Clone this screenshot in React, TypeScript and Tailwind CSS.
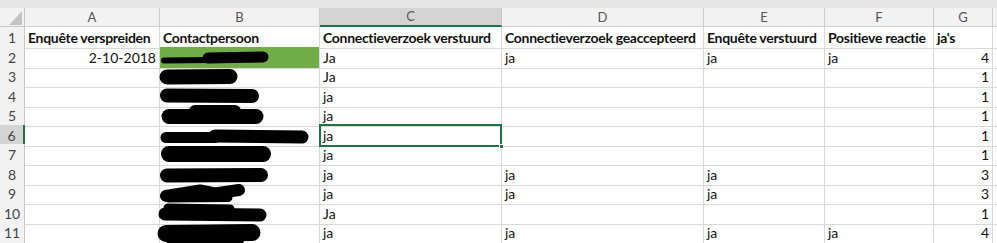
import React from "react";

const cols = ["A", "B", "C", "D", "E", "F", "G"];
const heights = ["h-[20px]", "h-[19px]", "h-[20px]", "h-[19px]", "h-[20px]", "h-[19px]", "h-[20px]", "h-[19px]", "h-[20px]", "h-[19px]", "h-[20px]"];

type Row = { a?: string; c?: string; d?: string; e?: string; f?: string; g?: string };
const data: Row[] = [
  { a: "2-10-2018", c: "Ja", d: "ja", e: "ja", f: "ja", g: "4" },
  { c: "Ja", g: "1" },
  { c: "ja", g: "1" },
  { c: "ja", g: "1" },
  { c: "ja", g: "1" },
  { c: "ja", g: "1" },
  { c: "ja", d: "ja", e: "ja", g: "3" },
  { c: "ja", d: "ja", e: "ja", g: "3" },
  { c: "Ja", g: "1" },
  { c: "ja", d: "ja", e: "ja", f: "ja", g: "4" },
];

const grid = "grid grid-cols-[25px_135px_160px_182px_202px_121px_109px_59px_1fr]";
const cell = "border-r border-b border-[#d9d9d9] flex items-end pb-[2px] px-[3px] whitespace-nowrap overflow-visible leading-[16px]";

export default function App() {
  const headers = ["Enquête verspreiden", "Contactpersoon", "Connectieverzoek verstuurd", "Connectieverzoek geaccepteerd", "Enquête verstuurd", "Positieve reactie", "ja's"];
  return (
    <div className="relative w-[997px] h-[243px] overflow-hidden bg-white text-[14px] text-[#111]" style={{ fontFamily: "Lato, 'Open Sans', sans-serif" }}>
      <div className="h-[8px] bg-[#e6e6e6]" />
      <div className={`${grid} h-[19px] bg-[#f2f2f2] text-[#555] text-[13px]`}>
        <div className="border-r border-b border-[#c8c8c8] relative">
          <svg width="25" height="19" className="absolute inset-0">
            <polygon points="22,3 22,17 9,17" fill="#c4c4c4" />
          </svg>
        </div>
        {cols.map((c) => (
          <div
            key={c}
            className={
              c === "C"
                ? "bg-[#d4d4d4] border-r border-[#c8c8c8] border-b-2 border-b-[#217346] flex items-center justify-center leading-none"
                : "border-r border-b border-[#cfcfcf] flex items-center justify-center leading-none"
            }
          >
            {c}
          </div>
        ))}
        <div className="border-b border-[#cfcfcf]" />
      </div>
      {/* row 1 */}
      <div className={`${grid} ${heights[0]} font-bold tracking-[-0.3px]`}>
        <div className="bg-[#f2f2f2] border-r border-b border-[#c8c8c8] flex items-center justify-center text-[#444] font-normal tracking-normal">1</div>
        {headers.map((h, i) => (
          <div key={i} className={cell}>{h}</div>
        ))}
        <div className="border-b border-[#d9d9d9]" />
      </div>
      {data.map((r, i) => {
        const n = i + 2;
        const sel = n === 6;
        return (
          <div key={n} className={`${grid} ${heights[i + 1]}`}>
            <div
              className={
                sel
                  ? "bg-[#d4d4d4] border-r-2 border-r-[#217346] border-b border-[#c8c8c8] flex items-center justify-center text-[#444]"
                  : "bg-[#f2f2f2] border-r border-b border-[#c8c8c8] flex items-center justify-center text-[#444]"
              }
            >
              {n}
            </div>
            <div className={`${cell} justify-end`}>{r.a}</div>
            <div className={n === 2 ? `${cell} bg-[#70ad47]` : cell} />
            <div className={sel ? `${cell} relative` : cell}>
              {r.c}
              {sel && (
                <div className="absolute left-[-1px] top-[-1px] right-[-1px] bottom-[-1px] border-2 border-[#217346]">
                  <div className="absolute right-[-4px] bottom-[-4px] w-[5px] h-[5px] bg-[#217346] border border-white" />
                </div>
              )}
            </div>
            <div className={cell}>{r.d}</div>
            <div className={cell}>{r.e}</div>
            <div className={cell}>{r.f}</div>
            <div className={`${cell} justify-end`}>{r.g}</div>
            <div className="border-b border-[#d9d9d9]" />
          </div>
        );
      })}
      <svg className="absolute left-0 top-0 pointer-events-none" width="997" height="243">
        <g stroke="#000" fill="none" strokeLinecap="round" strokeLinejoin="round">
          <path d="M164 60.5 L212 60" strokeWidth="6" />
          <path d="M208 58 L263 57" strokeWidth="11" />
          <path d="M167 77 L230 76.5" strokeWidth="15" />
          <path d="M167 95.5 L252 96" strokeWidth="14" />
          <path d="M169 116.5 L256 116.5" strokeWidth="15" />
          <path d="M195 111 L235 111" strokeWidth="12" />
          <path d="M166 137.5 L215 137.5" strokeWidth="11" />
          <path d="M215 136 L302 137" strokeWidth="13" />
          <path d="M169 154 L263 154" strokeWidth="16" />
          <path d="M167 175.5 L261 175" strokeWidth="14" />
          <path d="M166 196 L200 190.5 L215 193.5 L239 190" strokeWidth="12" />
          <path d="M169 198 L228 197.5" strokeWidth="9" />
          <path d="M165 214 L260 215" strokeWidth="13" />
          <path d="M168 208 L230 209" strokeWidth="9" />
          <path d="M166 233.5 L252 232.5" strokeWidth="17" />
          <path d="M170 240 L240 240" strokeWidth="8" />
        </g>
      </svg>
    </div>
  );
}
